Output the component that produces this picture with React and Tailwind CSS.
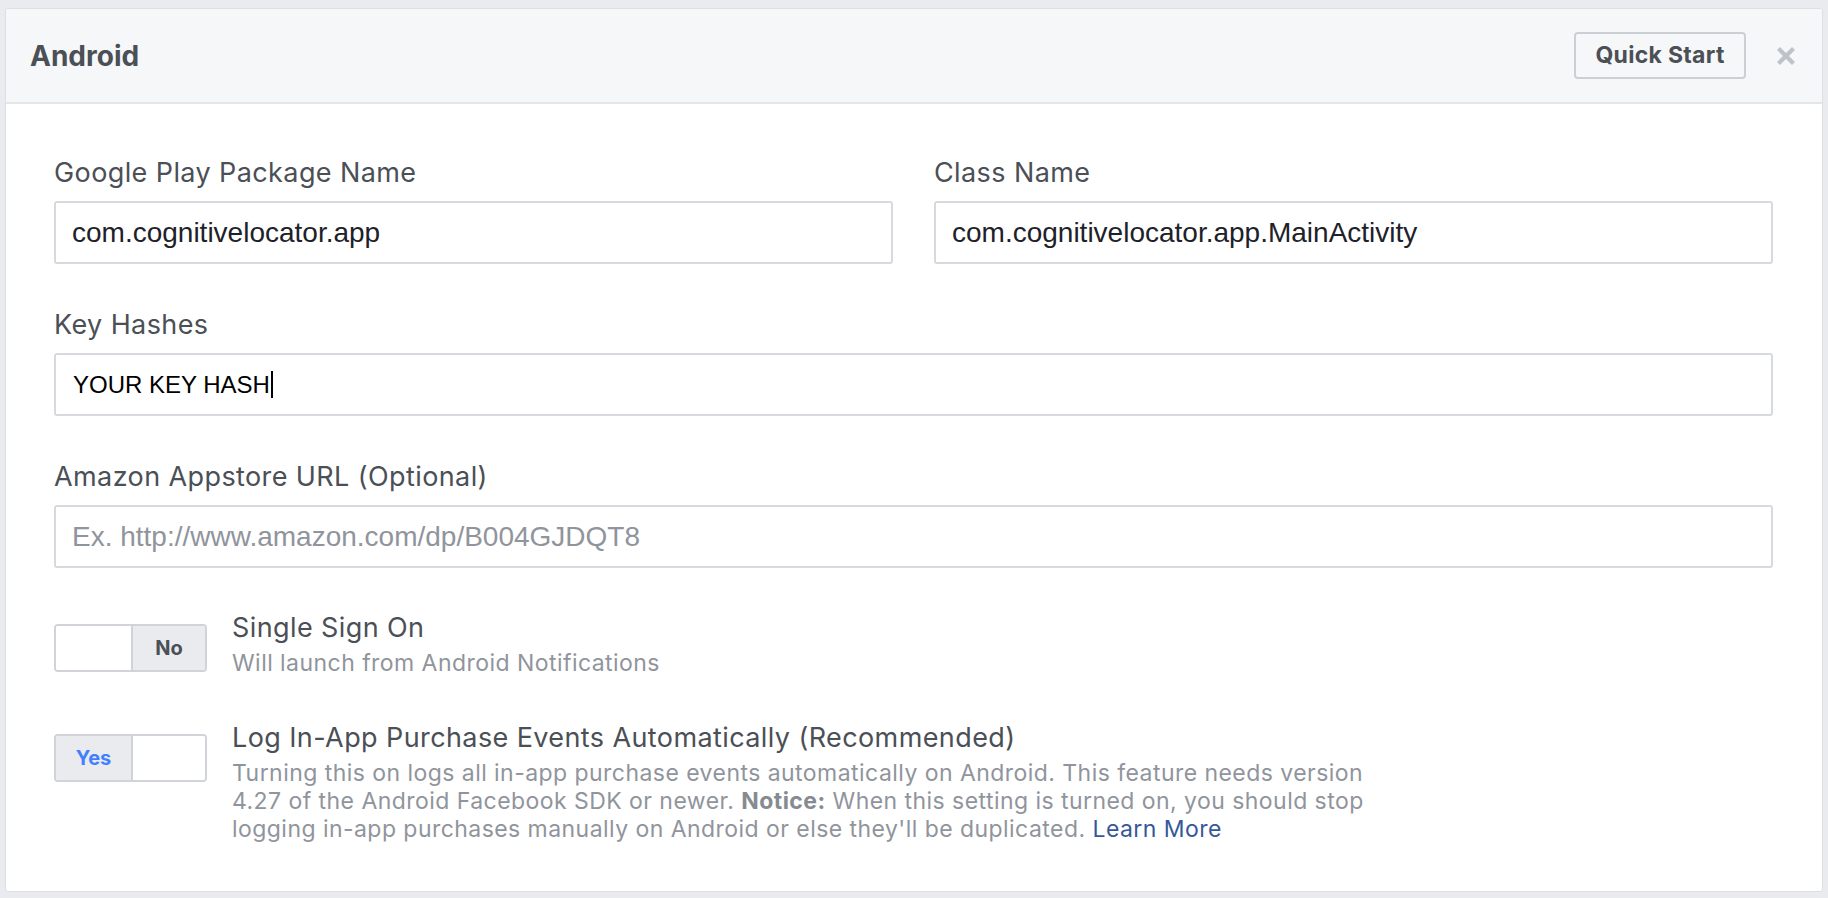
import React from 'react';

const labelCls = "text-[27px] leading-[32px] tracking-[0.4px] text-[#4b4f56] mb-[12px]";
const inputCls = "h-[63px] border-2 border-[#d6d9dd] rounded-[3px] bg-white flex items-center px-[16px] text-[28px] text-[#1d2129] font-['Liberation_Sans',Arial,sans-serif]";
const descCls = "mt-[5px] text-[23px] leading-[28px] tracking-[0.45px] text-[#90949c]";

const Field = ({ label, children }) => (
  <div className="flex flex-col">
    <div className={labelCls}>{label}</div>
    {children}
  </div>
);

const Toggle = ({ on }) => (
  <div className="mt-[12px] w-[153px] h-[48px] border-2 border-[#d0d3d8] rounded-[4px] flex overflow-hidden shrink-0">
    {on ? (
      <>
        <div className="w-[75px] bg-[#e9ebee] flex items-center justify-center text-[20px] font-bold text-[#4080ff]">Yes</div>
        <div className="flex-1 bg-white border-l-2 border-[#d0d3d8]" />
      </>
    ) : (
      <>
        <div className="w-[77px] bg-white border-r-2 border-[#d0d3d8]" />
        <div className="flex-1 bg-[#e9ebee] flex items-center justify-center text-[20px] font-bold text-[#4b4f56]">No</div>
      </>
    )}
  </div>
);

export default function App() {
  return (
    <div className="w-[1828px] h-[898px] bg-[#e9ebee] pt-[8px] px-[5px] font-['Inter',sans-serif]">
      <div className="bg-white border border-[#dddfe2] rounded-[3px] h-[884px] flex flex-col">
        {/* Header */}
        <div className="h-[95px] bg-[#f6f7f9] border-b-2 border-[#e5e6e9] flex items-center pl-[24px] pr-[26px] rounded-t-[3px]">
          <div className="flex-1 text-[28px] font-bold text-[#4b4f56]">Android</div>
          <button className="h-[47px] w-[172px] border-2 border-[#ccd0d5] rounded-[4px] bg-[#f6f7f9] text-[23px] font-bold text-[#4b4f56] tracking-[0.3px]">
            Quick Start
          </button>
          <svg className="ml-[30px]" width="20" height="20" viewBox="0 0 20 20">
            <path d="M2.5 2.5L17.5 17.5M17.5 2.5L2.5 17.5" stroke="#bec2c9" strokeWidth="4.2" />
          </svg>
        </div>

        {/* Body */}
        <div className="pt-[53px] pl-[48px] pr-[49px] flex flex-col">
          <div className="grid grid-cols-2 gap-x-[41px]">
            <Field label="Google Play Package Name">
              <div className={inputCls}>com.cognitivelocator.app</div>
            </Field>
            <Field label="Class Name">
              <div className={inputCls}>com.cognitivelocator.app.MainActivity</div>
            </Field>
          </div>

          <div className="mt-[45px]">
            <Field label="Key Hashes">
              <div className="h-[63px] border-2 border-[#d6d9dd] rounded-[3px] bg-white flex items-center pl-[17px] text-[24px] text-black font-['Liberation_Sans',Arial,sans-serif]">
                YOUR KEY HASH
                <span className="ml-[1px] w-[2px] h-[27px] bg-black" />
              </div>
            </Field>
          </div>

          <div className="mt-[45px]">
            <Field label="Amazon Appstore URL (Optional)">
              <div className={inputCls + " !text-[#90949c]"}>Ex. http://www.amazon.com/dp/B004GJDQT8</div>
            </Field>
          </div>

          {/* Single sign on */}
          <div className="mt-[44px] flex items-start gap-[25px]">
            <Toggle on={false} />
            <div className="flex flex-col">
              <div className="text-[27px] leading-[32px] tracking-[0.4px] text-[#4b4f56]">Single Sign On</div>
              <div className={descCls}>Will launch from Android Notifications</div>
            </div>
          </div>

          {/* Log in-app purchases */}
          <div className="mt-[45px] flex items-start gap-[25px]">
            <Toggle on={true} />
            <div className="flex flex-col">
              <div className="text-[27px] leading-[32px] tracking-[0.4px] text-[#4b4f56]">Log In-App Purchase Events Automatically (Recommended)</div>
              <div className={descCls + " whitespace-nowrap"}>
                Turning this on logs all in-app purchase events automatically on Android. This feature needs version<br />
                4.27 of the Android Facebook SDK or newer. <span className="font-bold text-[#868a91]">Notice:</span> When this setting is turned on, you should stop<br />
                logging in-app purchases manually on Android or else they'll be duplicated. <a className="text-[#365899]" href="#">Learn More</a>
              </div>
            </div>
          </div>
        </div>
      </div>
    </div>
  );
}
